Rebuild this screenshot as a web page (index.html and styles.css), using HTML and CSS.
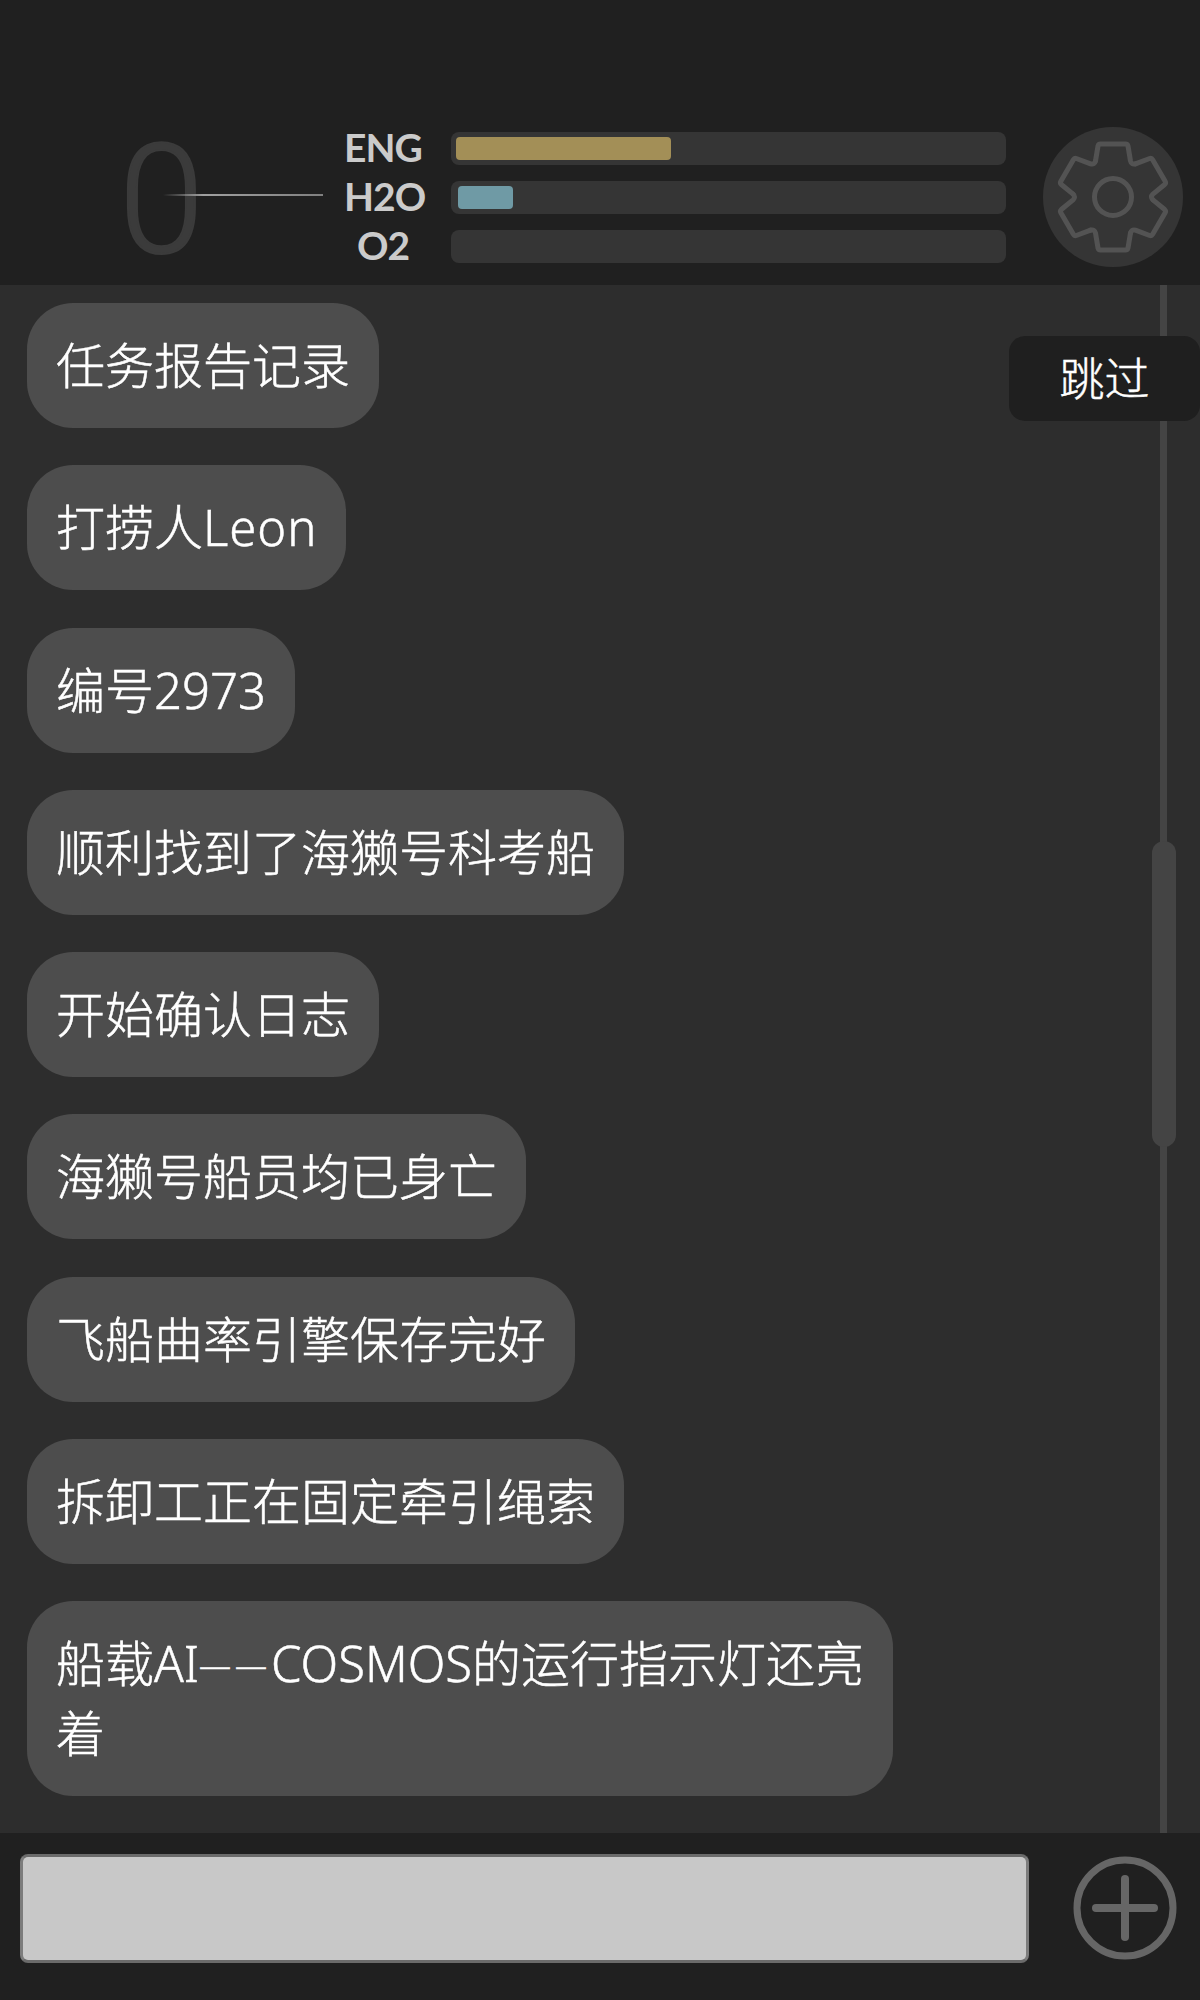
FILE: index.html
```html
<!DOCTYPE html>
<html lang="zh-CN">
<head>
  <meta charset="UTF-8">
  <title>Log</title>
  <link rel="stylesheet" href="styles.css">
</head>
<body>
  <div class="app">
    <header class="status">
      <div class="score">
        <span class="score-num">0</span>
        <span class="score-line"></span>
      </div>
      <div class="meters">
        <div class="meter">
          <span class="meter-name">ENG</span>
          <div class="meter-track"><div class="meter-fill eng"></div></div>
        </div>
        <div class="meter">
          <span class="meter-name">H2O</span>
          <div class="meter-track"><div class="meter-fill h2o"></div></div>
        </div>
        <div class="meter">
          <span class="meter-name">O2</span>
          <div class="meter-track"></div>
        </div>
      </div>
      <button class="gear" type="button" aria-label="settings">
        <svg width="140" height="140" viewBox="-70 -70 140 140">
          <defs>
            <path id="tooth" d="M-17.5 -36 L-15 -51 Q-14.6 -53 -12.5 -53 H12.5 Q14.6 -53 15 -51 L17.5 -36 Q18.5 -32 22.4 -33.2"></path>
          </defs>
          <g class="gear-lines">
            <use href="#tooth"></use>
            <use href="#tooth" transform="rotate(60)"></use>
            <use href="#tooth" transform="rotate(120)"></use>
            <use href="#tooth" transform="rotate(180)"></use>
            <use href="#tooth" transform="rotate(240)"></use>
            <use href="#tooth" transform="rotate(300)"></use>
            <circle r="18.5"></circle>
          </g>
        </svg>
      </button>
    </header>

    <main class="log">
      <div class="bubble">任务报告记录</div>
      <div class="bubble">打捞人<span class="latin">Leon</span></div>
      <div class="bubble">编号2973</div>
      <div class="bubble">顺利找到了海獭号科考船</div>
      <div class="bubble">开始确认日志</div>
      <div class="bubble">海獭号船员均已身亡</div>
      <div class="bubble">飞船曲率引擎保存完好</div>
      <div class="bubble">拆卸工正在固定牵引绳索</div>
      <div class="bubble">船载AI<span class="dash">——</span>COSMOS的运行指示灯还亮<br>着</div>

      <div class="scroll-track"></div>
      <div class="scroll-thumb"></div>
      <button class="skip" type="button">跳过</button>
    </main>

    <footer class="composer">
      <input class="composer-input" type="text">
      <button class="add" type="button" aria-label="add">
        <svg width="104" height="104" viewBox="0 0 104 104">
          <circle class="add-ring" cx="52" cy="52" r="48"></circle>
          <rect class="add-bar" x="19" y="48" width="66" height="8" rx="4"></rect>
          <rect class="add-bar" x="48" y="19" width="8" height="66" rx="4"></rect>
        </svg>
      </button>
    </footer>
  </div>
</body>
</html>
```

FILE: styles.css
```css
* {
  box-sizing: border-box;
}

body {
  margin: 0;
  background: #2d2d2d;
  font-family: "Noto Sans", "Noto Sans CJK SC", sans-serif;
}

button {
  border: none;
  padding: 0;
  font: inherit;
  cursor: pointer;
}

.app {
  display: flex;
  flex-direction: column;
  height: 2000px;
  overflow: hidden;
}

/* Top status bar */
.status {
  display: flex;
  align-items: center;
  height: 285px;
  padding: 127px 17px 18px 119px;
  background: #202020;
}

.score {
  position: relative;
  width: 225px;
  flex: none;
}

.score-num {
  display: block;
  padding-top: 7px;
  font-family: Roboto, sans-serif;
  font-weight: 300;
  font-size: 153px;
  line-height: 140px;
  color: #3b3b3b;
  -webkit-text-stroke: 2px #3b3b3b;
}

.score-line {
  position: absolute;
  left: 44px;
  top: 70px;
  width: 160px;
  height: 2px;
  background: linear-gradient(to right, rgba(170, 170, 170, 0), #a0a0a0 25%, #808080);
}

.meters {
  display: flex;
  flex-direction: column;
  gap: 16px;
  width: 662px;
  flex: none;
}

.meter {
  display: flex;
  align-items: center;
  gap: 29px;
}

.meter-name {
  width: 78px;
  margin-top: -2px;
  flex: none;
  text-align: center;
  font-family: Lato, sans-serif;
  font-weight: 700;
  font-size: 39px;
  letter-spacing: -1px;
  line-height: 33px;
  color: #cbcbcb;
}

.meter-track {
  flex: 1;
  height: 33px;
  padding: 5px;
  border-radius: 8px;
  background: #353535;
}

.meter-fill {
  height: 23px;
  border-radius: 4px;
}

.meter-fill.eng {
  width: 215px;
  background: #a38f57;
}

.meter-fill.h2o {
  width: 55px;
  margin-left: 2px;
  background: #6f9aa5;
}

.gear {
  width: 140px;
  height: 140px;
  margin-left: auto;
  flex: none;
  border-radius: 50%;
  background: #353535;
}

.gear svg {
  display: block;
}

.gear-lines {
  fill: none;
  stroke: #535353;
  stroke-width: 5;
  stroke-linejoin: round;
  stroke-linecap: round;
}

/* Message list */
.log {
  position: relative;
  flex: 1;
  display: flex;
  flex-direction: column;
  align-items: flex-start;
  gap: 37.3px;
  padding: 18px 0 0 27px;
  overflow: hidden;
}

.bubble {
  padding: 27px 29px 28px;
  border-radius: 46px;
  background: #4d4d4d;
  color: #fff;
  font-size: 49px;
  font-weight: 300;
  line-height: 70px;
  white-space: nowrap;
  -webkit-text-stroke: 0.5px #fff;
}

.latin {
  letter-spacing: 1px;
}

.dash {
  display: inline-block;
  font-size: 32px;
  letter-spacing: 4px;
  line-height: 1;
  vertical-align: 5px;
}

.scroll-track {
  position: absolute;
  top: 0;
  bottom: 0;
  left: 1160px;
  width: 7px;
  background: #444;
}

.scroll-thumb {
  position: absolute;
  top: 556px;
  left: 1152px;
  width: 24px;
  height: 306px;
  border-radius: 12px;
  background: #444;
}

.skip {
  position: absolute;
  top: 51px;
  right: 0;
  width: 191px;
  height: 85px;
  padding-bottom: 4px;
  border-radius: 16px;
  background: #1f1f1f;
  color: #fff;
  font-size: 45px;
  font-weight: 300;
  -webkit-text-stroke: 0.5px #fff;
}

/* Bottom input bar */
.composer {
  display: flex;
  align-items: flex-start;
  justify-content: space-between;
  height: 167px;
  padding: 21px 23px 0 20px;
  background: #202020;
}

.composer-input {
  width: 1009px;
  height: 109px;
  margin: 0;
  border: 3px solid #6b6b6b;
  border-left-color: #7c7c7c;
  border-right-color: #7c7c7c;
  border-radius: 8px;
  background: #c8c8c8;
}

.add {
  width: 104px;
  height: 104px;
  margin-top: 2px;
  background: none;
}

.add svg {
  display: block;
}

.add-ring {
  fill: none;
  stroke: #666;
  stroke-width: 7;
}

.add-bar {
  fill: #666;
}
```
